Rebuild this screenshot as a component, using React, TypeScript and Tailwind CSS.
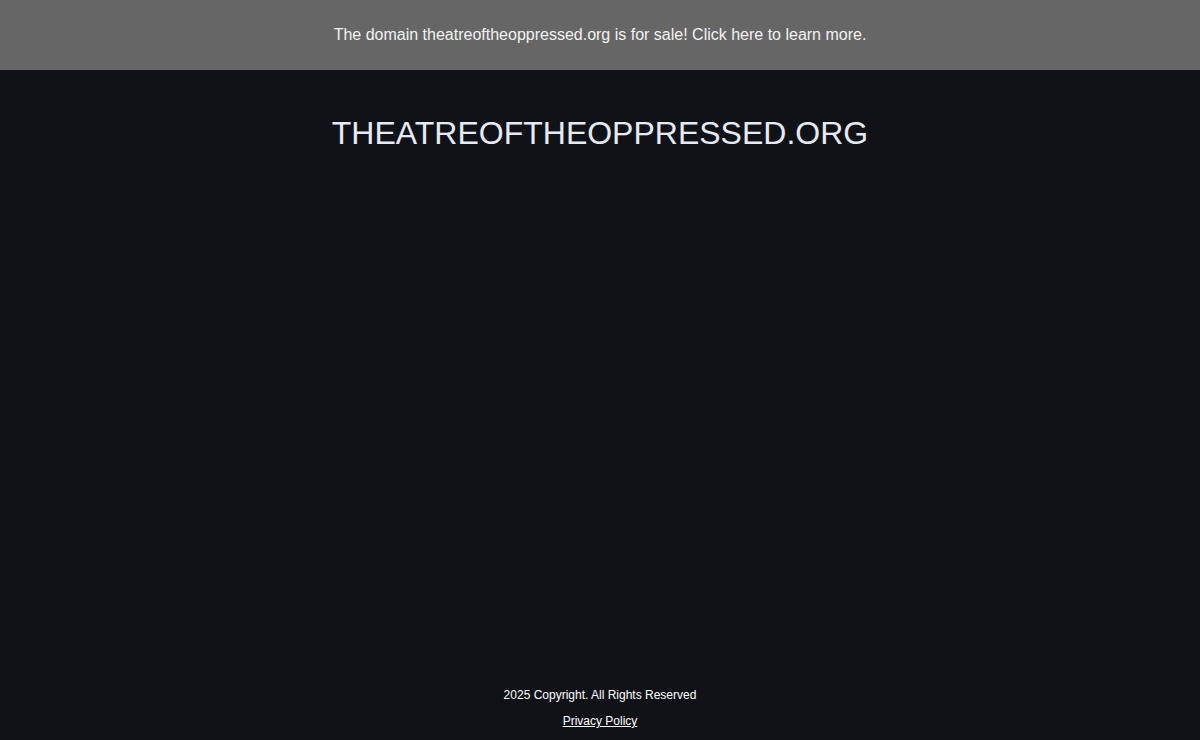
export default function App() {
  return (
    <div className="flex min-h-[740px] flex-col bg-[#111217] font-['Liberation_Sans',Arial,sans-serif]">
      <a href="#" className="flex h-[70px] items-center justify-center bg-[#666666] text-[16px] text-[#f2f2f2]">
        The domain theatreoftheoppressed.org is for sale! Click here to learn more.
      </a>
      <h1 className="mt-[44px] text-center text-[32px] leading-[38px] text-[#e6eaf5]">THEATREOFTHEOPPRESSED.ORG</h1>
      <div className="flex-1" />
      <footer className="flex flex-col items-center pb-[12px] text-[12px] text-white">
        <p className="leading-[14px]">2025 Copyright. All Rights Reserved</p>
        <a href="#" className="mt-[12px] leading-[14px] underline">Privacy Policy</a>
      </footer>
    </div>
  );
}
